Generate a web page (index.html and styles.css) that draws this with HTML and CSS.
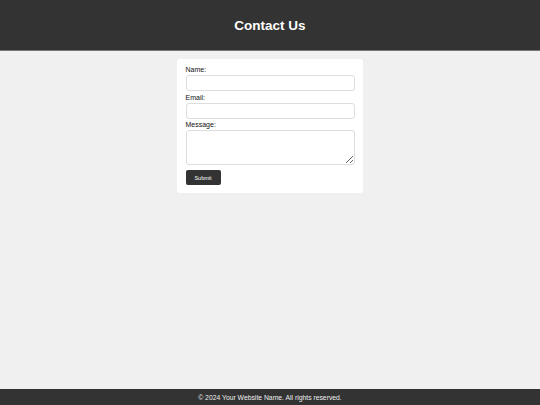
FILE: index.html
```html
<!DOCTYPE html>
<html>
<head>
<meta charset="utf-8">
<link rel="stylesheet" href="styles.css">
</head>
<body>
<header class="site-header"><h1 class="title">Contact Us</h1></header>
<main class="main">
  <form class="card">
    <label class="label" for="name">Name:</label>
    <input class="field" id="name" type="text">
    <label class="label" for="email">Email:</label>
    <input class="field" id="email" type="email">
    <label class="label" for="msg">Message:</label>
    <textarea class="field area" id="msg"></textarea>
    <button class="btn" type="button">Submit</button>
  </form>
</main>
<footer class="site-footer">© 2024 Your Website Name. All rights reserved.</footer>
</body>
</html>
```
FILE: styles.css
```css
html, body { margin: 0; padding: 0; height: 100%; }
body {
  font-family: "Liberation Sans", Arial, sans-serif;
  background: #f0f0f0;
  color: #111;
  display: flex;
  flex-direction: column;
}
.site-header {
  background: #333;
  height: 50px;
  border-bottom: 1px solid #777;
  display: flex;
  align-items: center;
  justify-content: center;
}
.title { margin: 0; color: #fff; font-size: 13.5px; font-weight: bold; }
.main { flex: 1; display: flex; justify-content: center; align-items: flex-start; padding-top: 8px; }
.card {
  width: 169px;
  background: #fff;
  border-radius: 3px;
  padding: 7px 8.5px 8px 8.5px;
  display: flex;
  flex-direction: column;
}
.label { font-size: 7px; line-height: 8px; margin-bottom: 1px; }
.field {
  box-sizing: border-box;
  width: 169px;
  height: 16px;
  border: 1px solid #ddd;
  border-radius: 3px;
  margin: 0 0 2.5px 0;
  padding: 2px;
  font-size: 7px;
  font-family: inherit;
}
.area { height: 34.5px; resize: vertical; margin-bottom: 5.5px; }
.btn {
  width: 35px;
  height: 15px;
  background: #333;
  color: #fff;
  border: none;
  border-radius: 2px;
  font-size: 5.5px;
  font-family: inherit;
  padding: 0;
}
.site-footer {
  background: #333;
  color: #eee;
  height: 16px;
  font-size: 6.8px;
  display: flex;
  align-items: center;
  justify-content: center;
}
```
